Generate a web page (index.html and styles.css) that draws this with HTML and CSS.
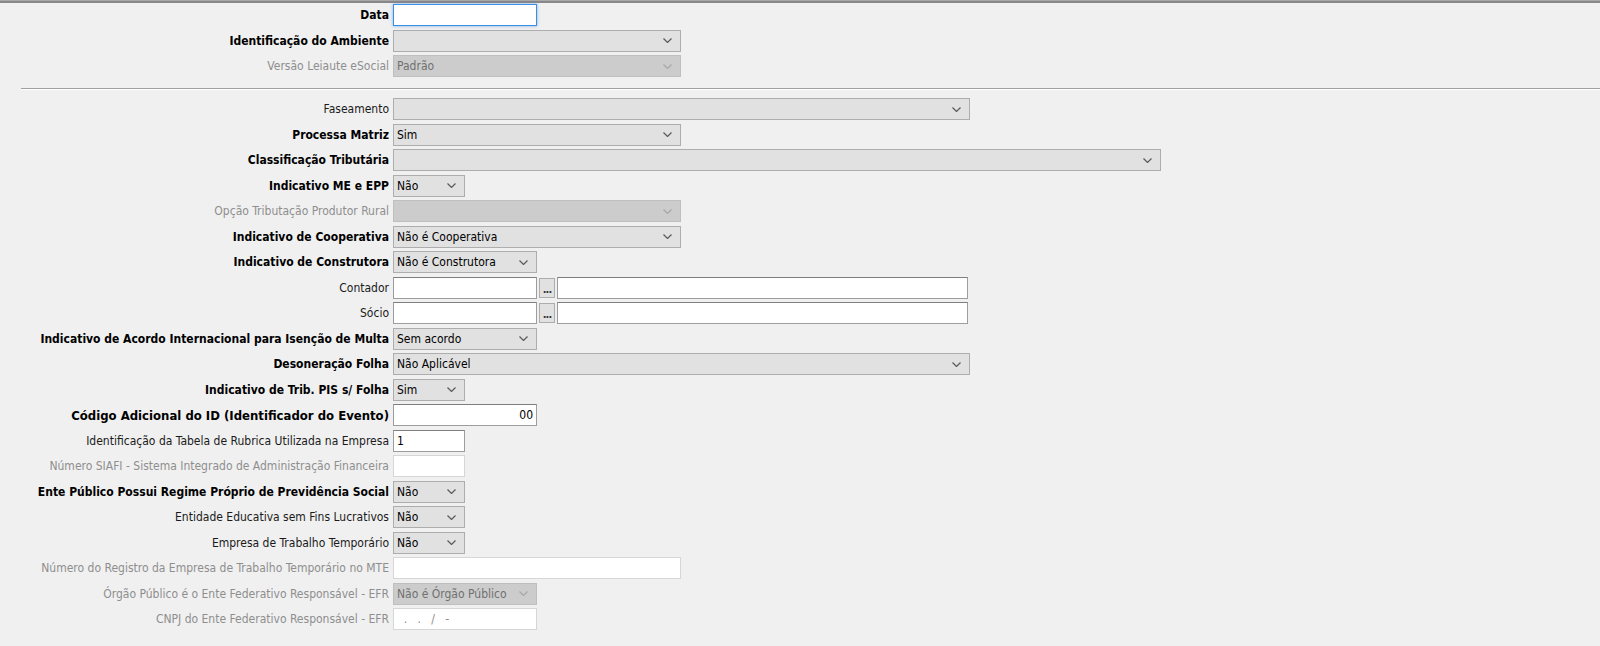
FILE: index.html
```html
<!DOCTYPE html>
<html lang="pt-BR">
  <head>
    <meta charset="UTF-8" />
    <title>Empregador</title>
    <link rel="stylesheet" href="styles.css">
  </head>
  <body>
    <div class="topbar"></div>

    <!-- cabeçalho -->
    <div class="section first">
      <div class="row">
        <label class="lbl bold">Data</label>
        <div class="input focus w144"></div>
      </div>
      <div class="row">
        <label class="lbl bold">Identificação do Ambiente</label>
        <div class="select w288"><span class="val"></span><svg class="chev" viewBox="0 0 9 5"><polyline points="0.5,0.5 4.5,4.5 8.5,0.5"/></svg></div>
      </div>
      <div class="row">
        <label class="lbl off">Versão Leiaute eSocial</label>
        <div class="select dis w288"><span class="val">Padrão</span><svg class="chev" viewBox="0 0 9 5"><polyline points="0.5,0.5 4.5,4.5 8.5,0.5"/></svg></div>
      </div>
    </div>

    <div class="sep"></div>

    <!-- dados do empregador -->
    <div class="section">
      <div class="row">
        <label class="lbl">Faseamento</label>
        <div class="select w577"><span class="val"></span><svg class="chev" viewBox="0 0 9 5"><polyline points="0.5,0.5 4.5,4.5 8.5,0.5"/></svg></div>
      </div>
      <div class="row">
        <label class="lbl bold">Processa Matriz</label>
        <div class="select w288"><span class="val">Sim</span><svg class="chev" viewBox="0 0 9 5"><polyline points="0.5,0.5 4.5,4.5 8.5,0.5"/></svg></div>
      </div>
      <div class="row">
        <label class="lbl bold">Classificação Tributária</label>
        <div class="select w768"><span class="val"></span><svg class="chev" viewBox="0 0 9 5"><polyline points="0.5,0.5 4.5,4.5 8.5,0.5"/></svg></div>
      </div>
      <div class="row">
        <label class="lbl bold">Indicativo ME e EPP</label>
        <div class="select w72"><span class="val">Não</span><svg class="chev" viewBox="0 0 9 5"><polyline points="0.5,0.5 4.5,4.5 8.5,0.5"/></svg></div>
      </div>
      <div class="row">
        <label class="lbl off">Opção Tributação Produtor Rural</label>
        <div class="select dis w288"><span class="val"></span><svg class="chev" viewBox="0 0 9 5"><polyline points="0.5,0.5 4.5,4.5 8.5,0.5"/></svg></div>
      </div>
      <div class="row">
        <label class="lbl bold">Indicativo de Cooperativa</label>
        <div class="select w288"><span class="val">Não é Cooperativa</span><svg class="chev" viewBox="0 0 9 5"><polyline points="0.5,0.5 4.5,4.5 8.5,0.5"/></svg></div>
      </div>
      <div class="row">
        <label class="lbl bold">Indicativo de Construtora</label>
        <div class="select w144"><span class="val">Não é Construtora</span><svg class="chev" viewBox="0 0 9 5"><polyline points="0.5,0.5 4.5,4.5 8.5,0.5"/></svg></div>
      </div>
      <div class="row">
        <label class="lbl">Contador</label>
        <div class="lookup">
          <div class="input w144"></div>
          <div class="dots">...</div>
          <div class="input w411"></div>
        </div>
      </div>
      <div class="row">
        <label class="lbl">Sócio</label>
        <div class="lookup">
          <div class="input w144"></div>
          <div class="dots">...</div>
          <div class="input w411"></div>
        </div>
      </div>
      <div class="row">
        <label class="lbl bold">Indicativo de Acordo Internacional para Isenção de Multa</label>
        <div class="select w144"><span class="val">Sem acordo</span><svg class="chev" viewBox="0 0 9 5"><polyline points="0.5,0.5 4.5,4.5 8.5,0.5"/></svg></div>
      </div>
      <div class="row">
        <label class="lbl bold">Desoneração Folha</label>
        <div class="select w577"><span class="val">Não Aplicável</span><svg class="chev" viewBox="0 0 9 5"><polyline points="0.5,0.5 4.5,4.5 8.5,0.5"/></svg></div>
      </div>
      <div class="row">
        <label class="lbl bold">Indicativo de Trib. PIS s/ Folha</label>
        <div class="select w72"><span class="val">Sim</span><svg class="chev" viewBox="0 0 9 5"><polyline points="0.5,0.5 4.5,4.5 8.5,0.5"/></svg></div>
      </div>
      <div class="row">
        <label class="lbl bold big">Código Adicional do ID (Identificador do Evento)</label>
        <div class="input w144 right">00</div>
      </div>
      <div class="row">
        <label class="lbl">Identificação da Tabela de Rubrica Utilizada na Empresa</label>
        <div class="input w72">1</div>
      </div>
      <div class="row">
        <label class="lbl off">Número SIAFI - Sistema Integrado de Administração Financeira</label>
        <div class="input dis w72"></div>
      </div>
      <div class="row">
        <label class="lbl bold">Ente Público Possui Regime Próprio de Previdência Social</label>
        <div class="select w72"><span class="val">Não</span><svg class="chev" viewBox="0 0 9 5"><polyline points="0.5,0.5 4.5,4.5 8.5,0.5"/></svg></div>
      </div>
      <div class="row">
        <label class="lbl">Entidade Educativa sem Fins Lucrativos</label>
        <div class="select w72"><span class="val">Não</span><svg class="chev" viewBox="0 0 9 5"><polyline points="0.5,0.5 4.5,4.5 8.5,0.5"/></svg></div>
      </div>
      <div class="row">
        <label class="lbl">Empresa de Trabalho Temporário</label>
        <div class="select w72"><span class="val">Não</span><svg class="chev" viewBox="0 0 9 5"><polyline points="0.5,0.5 4.5,4.5 8.5,0.5"/></svg></div>
      </div>
      <div class="row">
        <label class="lbl off">Número do Registro da Empresa de Trabalho Temporário no MTE</label>
        <div class="input dis w288"></div>
      </div>
      <div class="row">
        <label class="lbl off">Órgão Público é o Ente Federativo Responsável - EFR</label>
        <div class="select dis w144"><span class="val">Não é Órgão Público</span><svg class="chev" viewBox="0 0 9 5"><polyline points="0.5,0.5 4.5,4.5 8.5,0.5"/></svg></div>
      </div>
      <div class="row">
        <label class="lbl off">CNPJ do Ente Federativo Responsável - EFR</label>
        <div class="input dis w144 mask">&nbsp;&nbsp;.&nbsp;&nbsp;&nbsp;.&nbsp;&nbsp;&nbsp;/&nbsp;&nbsp;&nbsp;-</div>
      </div>
    </div>
  </body>
</html>
```

FILE: styles.css
```css
html, body {
  margin: 0;
  background: #f0f0f0;
}

body {
  font-family: "Liberation Sans Narrow", "DejaVu Sans Condensed", "Liberation Sans", sans-serif;
  font-size: 12px;
  color: #000;
  height: 646px;
  overflow: hidden;
}

.topbar {
  height: 2px;
  border-top: 1px solid #a8a8a8;
  background: #888;
}

.section {
  display: flex;
  flex-direction: column;
  gap: 3.5px;
}

.section.first {
  padding-top: 1px;
}

.sep {
  margin: 11px 0 8px 21px;
  height: 1px;
  border-top: 1px solid #a0a0a0;
  background: #fff;
}

.row {
  display: grid;
  grid-template-columns: 389px auto;
  column-gap: 4px;
  align-items: center;
  height: 22px;
}

.lbl {
  text-align: right;
  white-space: nowrap;
  color: #1a1a1a;
}

.lbl.bold {
  font-weight: bold;
  color: #000;
}

.lbl.big {
  font-size: 13px;
}

.lbl.off {
  color: #8e8e8e;
}

.input,
.select {
  box-sizing: border-box;
  height: 22px;
  display: flex;
  align-items: center;
  padding: 0 3px;
  white-space: nowrap;
  overflow: hidden;
}

.input {
  background: #fff;
  border: 1px solid #9d9d9d;
  border-top-color: #7e7e7e;
}

.input.focus {
  border: 1px solid #3a8ee6;
  box-shadow: 0 0 3px rgba(40, 120, 215, 0.55);
}

.input.dis {
  border-color: #d6d6d6;
}

.input.right {
  justify-content: flex-end;
}

.input.mask {
  color: #8a8a8a;
}

.select {
  background: #e1e1e1;
  border: 1px solid #adadad;
  justify-content: space-between;
}

.select.dis {
  background: #cccccc;
  border-color: #bfbfbf;
  color: #707070;
}

.chev {
  width: 9px;
  height: 5px;
  margin-right: 5px;
  flex: none;
}

.chev polyline {
  fill: none;
  stroke: #5a5a5a;
  stroke-width: 1.2;
}

.select.dis .chev polyline {
  stroke: #a8a8a8;
}

.lookup {
  display: flex;
  gap: 2px;
  align-items: center;
}

.dots {
  box-sizing: border-box;
  width: 16px;
  height: 20px;
  background: #e1e1e1;
  border: 1px solid #adadad;
  font-size: 11px;
  font-weight: bold;
  line-height: 22px;
  text-align: center;
  color: #333;
  letter-spacing: -1px;
}

.w72 { width: 72px; }
.w144 { width: 144px; }
.w288 { width: 288px; }
.w411 { width: 411px; }
.w577 { width: 577px; }
.w768 { width: 768px; }
```
